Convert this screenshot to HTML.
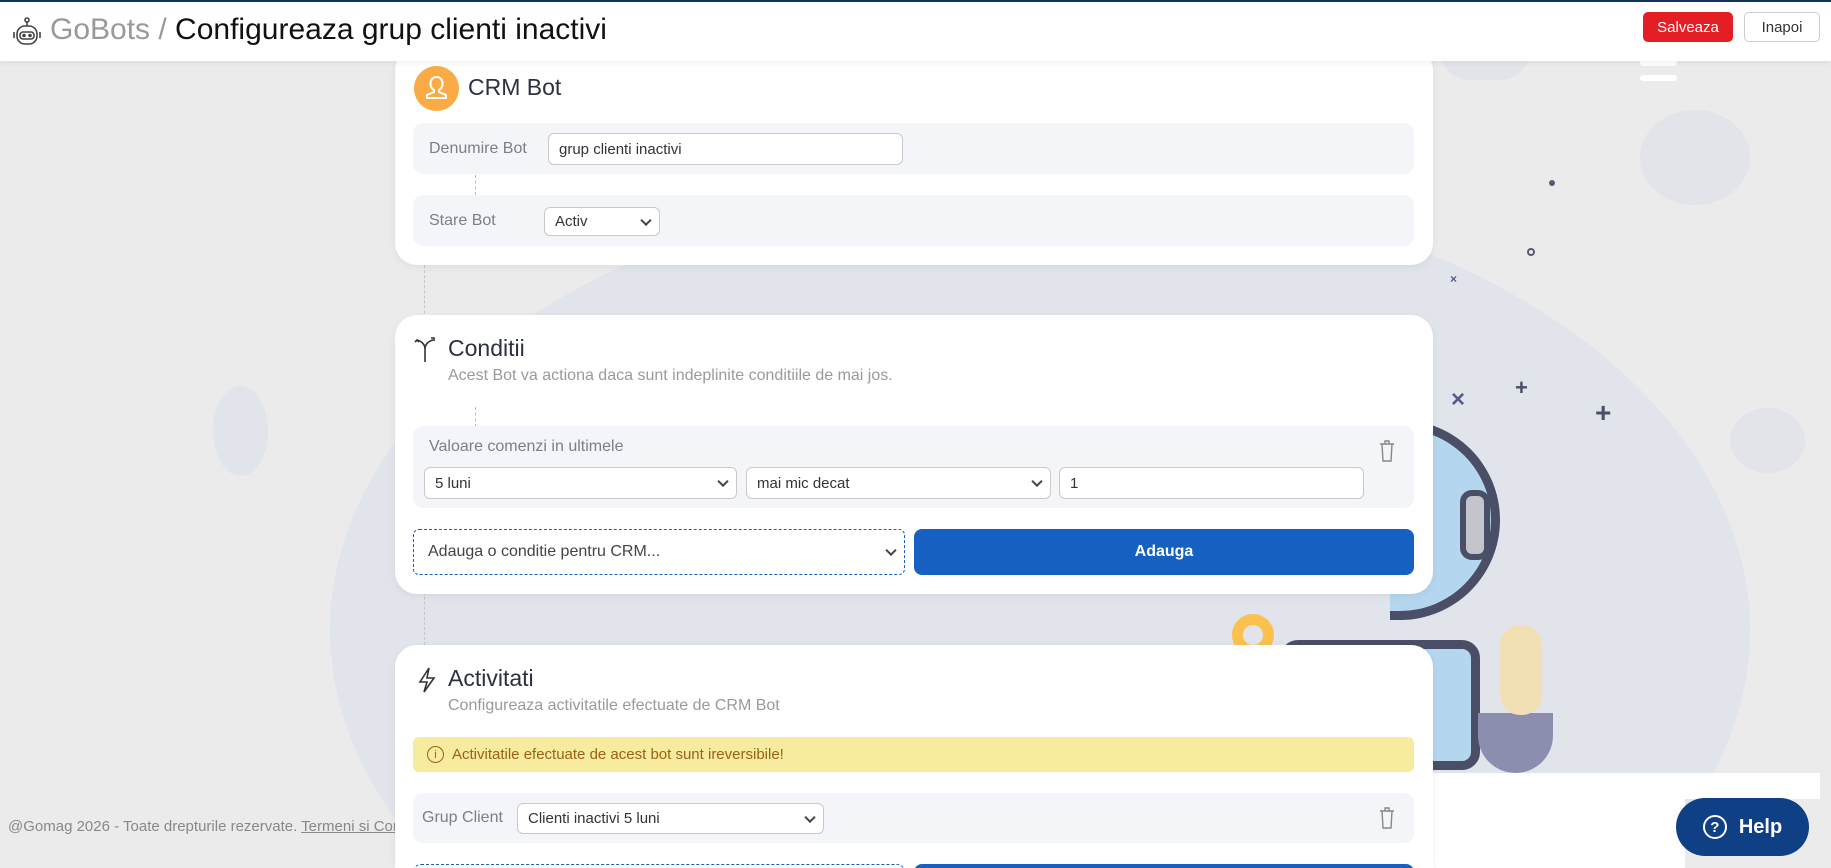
<!DOCTYPE html>
<html style="width:1831px;height:868px;overflow:hidden"><head><meta charset="utf-8"><style>
*{box-sizing:border-box;margin:0;padding:0}
html,body{width:1831px;height:868px;overflow:hidden}
body{background:#ebebeb;font-family:"Liberation Sans",sans-serif;position:relative;color:#333}
.abs{position:absolute}
.hdr{left:0;top:0;width:1831px;height:61px;background:#fff;border-top:2px solid #0f3460;box-shadow:0 2px 6px rgba(0,0,0,.06);z-index:5}
.card{position:absolute;left:395px;width:1038px;background:#fff;border-radius:22px;box-shadow:0 2px 8px rgba(0,0,0,.06);z-index:3}
.row{position:absolute;left:18px;width:1001px;background:#f4f5f8;border-radius:10px}
.lbl{position:absolute;font-size:16px;color:#7a7f88}
.inp{position:absolute;background:#fff;border:1px solid #c9c9c9;border-radius:6px;font-size:15px;color:#333;padding-left:10px;display:flex;align-items:center}
.chev{position:absolute;right:9px;top:50%;width:8px;height:8px;border-right:2px solid #444;border-bottom:2px solid #444;transform:translateY(-70%) rotate(45deg)}
.dash{position:absolute;left:80px;width:0;border-left:1px dashed #bbb}
.title{position:absolute;font-size:23px;color:#2c3140}
.sub{position:absolute;font-size:16px;color:#9a9a9a}
.btn{position:absolute;background:#1560c0;color:#fff;border-radius:8px;font-size:16px;display:flex;align-items:center;justify-content:center;font-weight:bold}
#clip{position:absolute;left:0;top:0;width:1831px;height:868px;overflow:hidden}
</style></head><body><div id="clip">
<div class="abs" style="left:330px;top:180px;width:1420px;height:900px;border-radius:50%;background:#e2e4ec"></div>
<div class="abs" style="left:1640px;top:110px;width:110px;height:95px;border-radius:50%;background:#e3e4ea"></div>
<div class="abs" style="left:1730px;top:408px;width:75px;height:65px;border-radius:50%;background:#e3e4ea"></div>
<div class="abs" style="left:213px;top:386px;width:55px;height:90px;border-radius:50%;background:#e2e4ec"></div>
<div class="abs" style="left:1440px;top:50px;width:90px;height:30px;border-radius:0 0 45px 45px;background:#e3e4ea"></div>
<div class="abs" style="left:1640px;top:60px;width:37px;height:6px;border-radius:3px;background:#fff"></div>
<div class="abs" style="left:1640px;top:75px;width:37px;height:6px;border-radius:3px;background:#fff"></div>
<div class="abs" style="left:1549px;top:180px;width:6px;height:6px;border-radius:50%;background:#555a70"></div>
<div class="abs" style="left:1527px;top:248px;width:8px;height:8px;border-radius:50%;border:2px solid #555a70"></div>
<div class="abs" style="left:1450px;top:272px;font-size:12px;color:#555a88;font-weight:bold">×</div>
<div class="abs" style="left:1451px;top:386px;font-size:24px;color:#555a88;font-weight:bold">×</div>
<div class="abs" style="left:1515px;top:375px;font-size:22px;color:#4a4f66;font-weight:bold">+</div>
<div class="abs" style="left:1595px;top:397px;font-size:28px;color:#4a4f66;font-weight:bold">+</div>
<div class="abs" style="left:1390px;top:420px;width:110px;height:200px;border:9px solid #4a4e66;border-left:none;border-radius:0 110px 110px 0;background:#b5d6ef"></div>
<div class="abs" style="left:1460px;top:490px;width:30px;height:70px;border:6px solid #4a4e66;border-radius:12px;background:#c5c3cb"></div>
<div class="abs" style="left:1280px;top:640px;width:200px;height:130px;border:9px solid #4a4e66;border-radius:18px;background:#b5d6ef"></div>
<div class="abs" style="left:1478px;top:713px;width:75px;height:60px;border-radius:0 0 38px 38px;background:#8c8eb0"></div>
<div class="abs" style="left:1500px;top:625px;width:42px;height:90px;border-radius:20px;background:#f2dfb4"></div>
<div class="abs" style="left:1232px;top:614px;width:42px;height:42px;border-radius:50%;border:11px solid #fbc04d"></div>
<div class="abs" style="left:1432px;top:773px;width:388px;height:26px;background:#fff"></div>
<div class="abs" style="left:1425px;top:799px;width:260px;height:69px;background:#fff"></div>
<div class="abs hdr">
 <svg class="abs" style="left:11px;top:14px" width="32" height="32" viewBox="0 0 32 32" fill="none" stroke="#444" stroke-width="1.6"><circle cx="16" cy="4" r="2"/><path d="M16 6v4"/><rect x="6" y="10" width="20" height="18" rx="8"/><rect x="9" y="16" width="14" height="7" rx="3"/><circle cx="13" cy="19.5" r="1" fill="#444"/><circle cx="19" cy="19.5" r="1" fill="#444"/><path d="M3 16v6M29 16v6"/></svg>
 <div class="abs" style="left:50px;top:11px;font-size:30px;color:#111;white-space:nowrap"><span style="color:#999">GoBots /</span> Configureaza grup clienti inactivi</div>
 <div class="abs" style="left:1643px;top:10px;width:90px;height:30px;background:#e31e24;border-radius:5px;color:#fff;font-size:15px;display:flex;align-items:center;justify-content:center">Salveaza</div>
 <div class="abs" style="left:1744px;top:10px;width:76px;height:30px;background:#fff;border:1px solid #ccc;border-radius:5px;color:#333;font-size:15px;display:flex;align-items:center;justify-content:center">Inapoi</div>
</div>
<div class="abs" style="left:424px;top:220px;height:430px;border-left:1px dashed #c5c5c5;z-index:2"></div>
<div class="card" style="top:48px;height:217px">
 <div class="abs" style="left:19px;top:18px;width:45px;height:45px;border-radius:50%;background:#fbab45"><svg width="45" height="45" viewBox="0 0 45 45" fill="none" stroke="#fff" stroke-width="2"><path d="M22.5 11c-4 0-6 3-6 6.5 0 3 1.5 5.5 3.5 6.5v2l-7 3v3h19v-3l-7-3v-2c2-1 3.5-3.5 3.5-6.5 0-3.5-2-6.5-6-6.5z"/></svg></div>
 <div class="title" style="left:73px;top:26px">CRM Bot</div>
 <div class="row" style="top:75px;height:51px">
  <div class="lbl" style="left:16px;top:17px">Denumire Bot</div>
  <div class="inp" style="left:135px;top:10px;width:355px;height:32px">grup clienti inactivi</div>
 </div>
 <div class="dash" style="top:127px;height:20px"></div>
 <div class="row" style="top:147px;height:51px">
  <div class="lbl" style="left:16px;top:17px">Stare Bot</div>
  <div class="inp" style="left:131px;top:12px;width:116px;height:29px">Activ<span class="chev"></span></div>
 </div>
</div>
<div class="card" style="top:315px;height:279px">
 <svg class="abs" style="left:19px;top:22px" width="22" height="26" viewBox="0 0 22 26" fill="none" stroke="#333" stroke-width="1.6"><path d="M11 25V12M11 12C11 7 7 4 3 3M11 12c0-5 4-8 8-9M1 5l2-2 2 2M17 1h3v3"/></svg>
 <div class="title" style="left:53px;top:20px">Conditii</div>
 <div class="sub" style="left:53px;top:52px">Acest Bot va actiona daca sunt indeplinite conditiile de mai jos.</div>
 <div class="dash" style="top:92px;height:20px"></div>
 <div class="row" style="top:111px;height:82px">
  <div class="lbl" style="left:16px;top:12px">Valoare comenzi in ultimele</div>
  <div class="inp" style="left:11px;top:41px;width:313px;height:32px">5 luni<span class="chev"></span></div>
  <div class="inp" style="left:333px;top:41px;width:305px;height:32px">mai mic decat<span class="chev"></span></div>
  <div class="inp" style="left:646px;top:41px;width:305px;height:32px">1</div>
  <svg class="abs" style="left:966px;top:14px" width="16" height="22" viewBox="0 0 16 22" fill="none" stroke="#888" stroke-width="1.4"><path d="M1 4h14M6 4V1h4v3M3 4l1 17h8l1-17"/></svg>
 </div>
 <div class="inp" style="left:18px;top:214px;width:492px;height:46px;border:1px dashed #1560c0;font-size:16px;color:#444;padding-left:14px">Adauga o conditie pentru CRM...<span class="chev"></span></div>
 <div class="btn" style="left:519px;top:214px;width:500px;height:46px">Adauga</div>
</div>
<div class="card" style="top:645px;height:223px;border-radius:22px 22px 0 0;overflow:hidden">
 <svg class="abs" style="left:22px;top:22px" width="20" height="26" viewBox="0 0 20 26" fill="none" stroke="#333" stroke-width="1.6"><path d="M12 1L3 15h7l-3 10 10-14h-7z"/></svg>
 <div class="title" style="left:53px;top:20px">Activitati</div>
 <div class="sub" style="left:53px;top:52px">Configureaza activitatile efectuate de CRM Bot</div>
 <div class="abs" style="left:18px;top:92px;width:1001px;height:35px;background:#f7eb9e;border-radius:6px;color:#9a6218;font-size:15px;display:flex;align-items:center;padding-left:14px"><span style="display:inline-flex;width:17px;height:17px;border:1.5px solid #9a6218;border-radius:50%;font-size:11px;align-items:center;justify-content:center;margin-right:8px">i</span>Activitatile efectuate de acest bot sunt ireversibile!</div>
 <div class="row" style="top:148px;height:50px">
  <div class="lbl" style="left:9px;top:16px">Grup Client</div>
  <div class="inp" style="left:104px;top:10px;width:307px;height:31px">Clienti inactivi 5 luni<span class="chev"></span></div>
  <svg class="abs" style="left:966px;top:14px" width="16" height="22" viewBox="0 0 16 22" fill="none" stroke="#888" stroke-width="1.4"><path d="M1 4h14M6 4V1h4v3M3 4l1 17h8l1-17"/></svg>
 </div>
 <div class="abs" style="left:18px;top:219px;width:492px;height:46px;border:1px dashed #1560c0;border-radius:8px"></div>
 <div class="btn" style="left:519px;top:219px;width:500px;height:46px"></div>
</div>
<div class="abs" style="left:8px;top:818px;font-size:15px;color:#888;white-space:nowrap;z-index:1">@Gomag 2026 - Toate drepturile rezervate. <u>Termeni si Conditii</u></div>
<div class="abs" style="left:1676px;top:798px;width:133px;height:58px;border-radius:29px;background:#0f3f85;color:#fff;font-size:20px;font-weight:bold;display:flex;align-items:center;justify-content:center;z-index:6"><span style="display:inline-flex;width:24px;height:24px;border:2.5px solid #fff;border-radius:50%;font-size:15px;align-items:center;justify-content:center;margin-right:12px">?</span>Help</div>
</div></body></html>
